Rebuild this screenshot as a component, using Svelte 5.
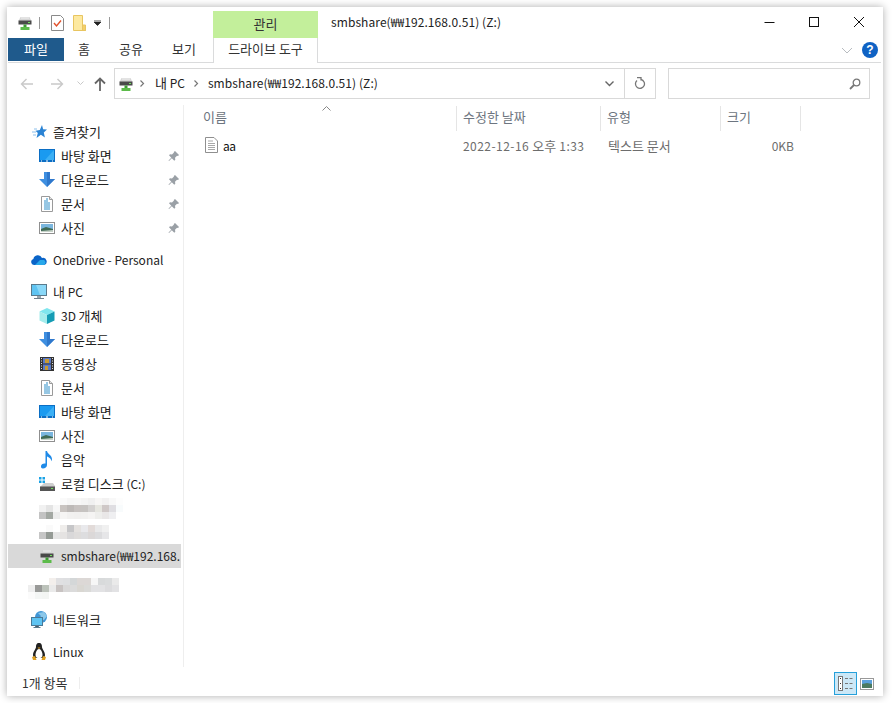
<script lang="ts">
  const title = 'smbshare(₩₩192.168.0.51) (Z:)'

  const favorites = [
    { icon: 'desktop', label: '바탕 화면' },
    { icon: 'download', label: '다운로드' },
    { icon: 'doc', label: '문서' },
    { icon: 'photo', label: '사진' }
  ]

  const pcItems = [
    { icon: 'cube', label: '3D 개체' },
    { icon: 'download', label: '다운로드' },
    { icon: 'film', label: '동영상' },
    { icon: 'doc', label: '문서' },
    { icon: 'desktop', label: '바탕 화면' },
    { icon: 'photo', label: '사진' },
    { icon: 'music', label: '음악' },
    { icon: 'disk', label: '로컬 디스크 (C:)' }
  ]

  // redacted drive names, drawn as coarse mosaics (cell colours by row)
  const mosaicA = [
    '#fff,#fff,#fff,#fafafa,#f6f6f6,#f7f7f7,#f4f4f4,#f0f0f0,#f7f6f5,#f2f1f1,#f8f8f8,#fdfdfd',
    '#f1f1f1,#e4e4e4,#f7f7f7,#c9c4c1,#bdb9b7,#c7c2c0,#c6c3c1,#d4d2d1,#e6e6e0,#cfc8c7,#dfdee2,#f8fbfc',
    '#c3c3c3,#a3a8a3,#ececec,#f6f5f4,#f2f1f0,#f1f0ef,#f2f1f0,#f5f4f3,#eeeeec,#e9e7e7,#efeff1,#fff'
  ]
  const mosaicB = [
    '#fff,#fafafa,#fff,#efedeb,#c6c6c8,#e4e1df,#e9e9ec,#e2dbd9,#e9e9ea,#f0f0f0',
    '#c6c6c6,#959b96,#e6e6e6,#e5e3e2,#d9d8d9,#dedcdb,#dddddf,#dbd8d8,#dcdcde,#e6e6e8'
  ]
  const mosaicC = [
    '#fff,#fff,#fff,#f3efec,#e0e0e2,#dedfe1,#d4d7d8,#dcd8d6,#dcd8d6,#f6f6f6,#d8dadb,#dadcdd,#eaeaea',
    '#eeeeee,#999a98,#bcc2ba,#eaeaea,#c8c3c2,#d9d8d8,#dbdbdb,#d9d7d2,#dadad8,#e2e2e4,#e2e2e4,#dcdcde,#e2e2e4',
    '#fbfbfb,#f4f6f5,#f3f5f3,#fff,#fff,#fff,#fff,#fff,#fff,#fff,#fff,#fff,#fff'
  ]

  // Hangul runs are set a size up, the CJK font is narrower than the original one
  function runs(s: string): string[] {
    return s.split(/([\uAC00-\uD7A3]+(?: [\uAC00-\uD7A3]+)*)/)
  }
</script>

{#snippet txt(s: string)}
  {#each runs(s) as part, i}
    {#if i % 2 === 1}<span class="ko">{part}</span>{:else if part}<span class="lat">{part}</span>{/if}
  {/each}
{/snippet}

{#snippet smbIcon()}
  <svg width="16" height="16" viewBox="0 0 16 16">
    <path d="M3.500 2h9l2 4h-13z" fill="#d6d6d6" />
    <path d="M4 3h8" stroke="#f0f0f0" />
    <rect x="1.500" y="5.500" width="13" height="4" fill="#4a4a4a" />
    <rect x="11" y="7" width="2" height="1" fill="#6fe05c" />
    <rect x="6.500" y="9.500" width="3" height="2.500" fill="#3f9c35" />
    <rect x="3.500" y="12" width="9" height="3" fill="#5cbb4a" />
  </svg>
{/snippet}

{#snippet navIcon(name: string)}
  {#if name === 'desktop'}
    <svg width="16" height="16" viewBox="0 0 16 16">
      <rect x="0" y="1" width="16" height="13" fill="#0b6ec4" />
      <path d="M1 2h14v10H1z" fill="#1a9af0" />
      <path d="M15 2v10H6z" fill="#3cb0f5" />
      <path d="M2 13h1M7 13h2M13 13h1" stroke="#fff" />
    </svg>
  {:else if name === 'download'}
    <svg width="16" height="16" viewBox="0 0 16 16">
      <path d="M5 0h6v7h5l-8 8-8-8h5z" fill="#3f8fe0" />
      <path d="M8 0h3v7h5l-8 8z" fill="#2f78cc" />
    </svg>
  {:else if name === 'doc'}
    <svg width="16" height="16" viewBox="0 0 16 16">
      <path d="M2.500.5h8l3 3v12h-11z" fill="#fff" stroke="#9a9a9a" />
      <path d="M7 3h2M5 5h4M5 7h6M5 9h6M5 11h6M5 13h6" stroke="#2f8fc8" />
      <path d="M10.500.5v3h3" fill="#e4e4e4" stroke="#9a9a9a" />
    </svg>
  {:else if name === 'photo'}
    <svg width="16" height="16" viewBox="0 0 16 16">
      <rect x=".5" y="2.500" width="15" height="11" fill="#fff" stroke="#8f8f8f" />
      <rect x="2" y="4" width="12" height="8" fill="#7ab6de" />
      <path d="M2 9l5-2 7 2v3H2z" fill="#3f6a55" />
      <path d="M2 11l12-1v2H2z" fill="#c6d2c8" />
    </svg>
  {:else if name === 'cube'}
    <svg width="16" height="16" viewBox="0 0 16 16">
      <path d="M8 0l7.500 3.500L8 7 .5 3.500z" fill="#7fe6ee" />
      <path d="M.5 3.500L8 7v9L.5 12.500z" fill="#a5ecec" />
      <path d="M15.500 3.500L8 7v9l7.500-3.500z" fill="#149cb4" />
    </svg>
  {:else if name === 'film'}
    <svg width="16" height="16" viewBox="0 0 16 16">
      <rect x="1" y="1" width="14" height="14" fill="#333" />
      <rect x="4" y="2" width="8" height="5.500" fill="#5a7ac8" />
      <rect x="4" y="8.500" width="8" height="5.500" fill="#5a7ac8" />
      <path d="M6 3h4v4H6zM6 10h3v4H6z" fill="#c89a30" />
      <path d="M2 2.500h1M2 5h1M2 7.500h1M2 10h1M2 12.500h1M13 2.500h1M13 5h1M13 7.500h1M13 10h1M13 12.500h1" stroke="#ddd" />
    </svg>
  {:else if name === 'music'}
    <svg width="16" height="18" viewBox="0 0 16 18">
      <path d="M6.500 0h1.500c.3 3 5 4 5 8 0 1-.3 1.700-.8 2.300.2-2.800-2.200-4-4.200-4.800V14c0 2-2 3.500-4 3.500S2 16.500 2 15s2-3 4.500-2.500z" fill="#1f8ae8" />
    </svg>
  {:else if name === 'disk'}
    <svg width="16" height="16" viewBox="0 0 16 16">
      <path d="M0 1h2.500v2.500H0zM3.500 1H6v2.500H3.500zM0 4.500h2.500V7H0zM3.500 4.500H6V7H3.500z" fill="#19a2e6" />
      <path d="M3 9l2-2h9l2 3v1H1z" fill="#cfcfcf" />
      <rect x="1" y="10.500" width="15" height="4.500" fill="#555" />
      <rect x="12" y="12" width="2" height="1" fill="#6fe05c" />
    </svg>
  {:else if name === 'star'}
    <svg width="16" height="16" viewBox="0 0 16 16">
      <path d="M11 1l1.100 4.200L16 5.500l-3.200 3 1.100 5-4-2.700L5.500 14l1.300-5L4.500 6.800l4.300-.8z" fill="#2a83d4" />
      <path d="M1 8h4M2 11h3M3 5h3" stroke="#8cc0ec" />
    </svg>
  {:else if name === 'cloud'}
    <svg width="16" height="16" viewBox="0 0 16 16">
      <path d="M3 13a3 3 0 0 1-.6-5.900A4.500 4.500 0 0 1 11 6a3.500 3.500 0 0 1 2 7z" fill="#0a64c8" />
      <path d="M4 13l5-5 4 0a2.800 2.800 0 0 1 0 5z" fill="#28a8ea" />
    </svg>
  {:else if name === 'pc'}
    <svg width="16" height="16" viewBox="0 0 16 16">
      <rect x=".5" y=".5" width="15" height="11" fill="#5fc4f2" stroke="#5a7a8c" />
      <path d="M5 1h10v10H9z" fill="#8ad8f8" />
      <path d="M6 12h4v2H6z" fill="#9aa6ae" />
      <path d="M3 14.500h10" stroke="#6f7f8a" />
    </svg>
  {:else if name === 'network'}
    <svg width="16" height="18" viewBox="0 0 16 18">
      <circle cx="10" cy="6" r="6" fill="#3f96d6" />
      <path d="M7 2l3 3-2 3 5 1 3-4-3-4z" fill="#8cc8ea" />
      <rect x=".5" y="6.500" width="11" height="8" fill="#5fc4f2" stroke="#4a7a98" />
      <path d="M4.500 15h3v1h-3zM2.500 16.500h7" stroke="#5d7b8e" />
    </svg>
  {:else if name === 'tux'}
    <svg width="16" height="18" viewBox="0 0 16 18">
      <path d="M8 0c2.500 0 3 2.200 3 4 0 2 3 4.500 3 8 0 1.500-1 3-2 3H4c-1 0-2-1.500-2-3 0-3.500 3-6 3-8 0-1.800.5-4 3-4z" fill="#222" />
      <path d="M8 6c2 0 3.500 3.500 3.500 6S10 15 8 15s-3.500-.5-3.500-3S6 6 8 6z" fill="#fff" />
      <path d="M6.500 4.500h3L8 6z" fill="#e0a020" />
      <path d="M1 14l3-1 1.500 4H2zM15 14l-3-1-1.500 4H14z" fill="#e0a020" />
    </svg>
  {/if}
{/snippet}

{#snippet mosaic(rows: string[], cls: string)}
  <div class="mosaic {cls}">
    {#each rows as row}
      <div class="mosaic-row">
        {#each row.split(',') as c}
          <span style="background:{c}"></span>
        {/each}
      </div>
    {/each}
  </div>
{/snippet}

<div class="window">
  <header class="titlebar">
    <div class="qat">
      {@render smbIcon()}
      <i class="qat-sep"></i>
      <svg width="13" height="16" viewBox="0 0 13 16">
        <path d="M.5.5h9l3 3v12H.5z" fill="#fff" stroke="#8a8a8a" />
        <path d="M3 8l2.500 3L10 5.500" fill="none" stroke="#e2502a" stroke-width="1.400" />
      </svg>
      <svg class="folder" width="13" height="16" viewBox="0 0 13 16">
        <path d="M.5.500h9v12h3v3H.5z" fill="#fde9a0" stroke="#e8c560" />
        <path d="M9.500 10h3v5.500h-3z" fill="#f4cf6a" stroke="#e8c560" />
      </svg>
      <svg class="drop" width="7" height="6" viewBox="0 0 7 6">
        <path d="M0 0h7M0 2h7L3.500 5.500z" stroke="#222" fill="#222" stroke-width=".8" />
      </svg>
      <i class="qat-sep last"></i>
    </div>
    <div class="context-tab">{@render txt('관리')}</div>
    <div class="win-title long">{title}</div>
    <div class="win-buttons">
      <svg width="12" height="12" viewBox="0 0 12 12"><path d="M1.500 6.500h10" stroke="#111" /></svg>
      <svg width="12" height="12" viewBox="0 0 12 12"><rect x="1.500" y="1.500" width="9" height="9" fill="none" stroke="#111" /></svg>
      <svg width="12" height="12" viewBox="0 0 12 12"><path d="M1 1l10 10M11 1L1 11" stroke="#111" /></svg>
    </div>
  </header>

  <nav class="ribbon">
    <div class="tab-file">{@render txt('파일')}</div>
    <div class="tab">{@render txt('홈')}</div>
    <div class="tab">{@render txt('공유')}</div>
    <div class="tab">{@render txt('보기')}</div>
    <div class="tab-drive">{@render txt('드라이브 도구')}</div>
    <div class="ribbon-end">
      <svg width="12" height="7" viewBox="0 0 12 7"><path d="M1 1l5 5 5-5" fill="none" stroke="#b8bcc0" /></svg>
      <div class="help">?</div>
    </div>
  </nav>

  <div class="address-row">
    <div class="nav-buttons">
      <svg width="14" height="12" viewBox="0 0 14 12"><path d="M13 6H2M6.500 1L1.500 6l5 5" fill="none" stroke="#c9c9c9" stroke-width="1.400" /></svg>
      <svg width="14" height="12" viewBox="0 0 14 12"><path d="M1 6h11M7.500 1l5 5-5 5" fill="none" stroke="#c9c9c9" stroke-width="1.400" /></svg>
      <svg width="7" height="5" viewBox="0 0 7 5"><path d="M.5.500l3 3 3-3" fill="none" stroke="#c9c9c9" /></svg>
      <svg class="up" width="12" height="14" viewBox="0 0 12 14"><path d="M6 14V2M1 6.500l5-5 5 5" fill="none" stroke="#666" stroke-width="1.800" /></svg>
    </div>
    <div class="address">
      <span class="addr-icon">{@render smbIcon()}</span>
      <svg class="crumb-arrow" width="5" height="7" viewBox="0 0 5 7"><path d="M.5.500l3 3-3 3" fill="none" stroke="#777" stroke-width="1.200" /></svg>
      <span class="crumb">{@render txt('내 PC')}</span>
      <svg class="crumb-arrow" width="5" height="7" viewBox="0 0 5 7"><path d="M.5.500l3 3-3 3" fill="none" stroke="#777" stroke-width="1.200" /></svg>
      <span class="crumb long">{title}</span>
      <div class="addr-drop">
        <svg width="9" height="6" viewBox="0 0 9 6"><path d="M.5.500l4 4 4-4" fill="none" stroke="#666" stroke-width="1.400" /></svg>
      </div>
      <div class="addr-refresh">
        <svg width="12" height="13" viewBox="0 0 12 13"><path d="M7 2.500a4.500 4.500 0 1 1-4 1M3 .5h4v3" fill="none" stroke="#777" stroke-width="1.300" /></svg>
      </div>
    </div>
    <div class="search">
      <svg width="12" height="12" viewBox="0 0 12 12"><circle cx="7.500" cy="4.500" r="3.300" fill="none" stroke="#777" stroke-width="1.300" /><path d="M5 7l-4 4" stroke="#777" stroke-width="1.800" /></svg>
    </div>
  </div>

  <div class="body">
    <aside class="sidebar">
      <div class="nav-row top"><span class="ico">{@render navIcon('star')}</span>{@render txt('즐겨찾기')}</div>
      {#each favorites as item}
        <div class="nav-row sub">
          <span class="ico">{@render navIcon(item.icon)}</span>{@render txt(item.label)}
          <svg class="pin" width="11" height="11" viewBox="0 0 11 11"><path d="M7 0l4 4-1 1-1-.3-2 2 .3 2-1 1-2.500-2.500L1 10l-.5-.5 2.800-2.800L1 4.300l1-1 2 .3 2-2L5.800 1z" fill="#9aa0a6" /></svg>
        </div>
      {/each}
      <div class="nav-row top gap"><span class="ico">{@render navIcon('cloud')}</span><span class="lat">OneDrive - Personal</span></div>
      <div class="nav-row top gap"><span class="ico">{@render navIcon('pc')}</span>{@render txt('내 PC')}</div>
      {#each pcItems as item}
        <div class="nav-row sub">
          <span class="ico">{@render navIcon(item.icon)}</span>{@render txt(item.label)}
        </div>
      {/each}
      <div class="nav-row sub">{@render mosaic(mosaicA, 'ma')}</div>
      <div class="nav-row sub">{@render mosaic(mosaicB, 'mb')}</div>
      <div class="nav-row sub selected"><span class="ico">{@render smbIcon()}</span><span class="lat">smbshare(₩₩192.168.</span></div>
      <div class="nav-row top gap">{@render mosaic(mosaicC, 'mc')}</div>
      <div class="nav-row top gap"><span class="ico">{@render navIcon('network')}</span>{@render txt('네트워크')}</div>
      <div class="nav-row top gap"><span class="ico">{@render navIcon('tux')}</span><span class="lat">Linux</span></div>
    </aside>

    <main class="files">
      <div class="col-head">
        <svg class="sort" width="9" height="5" viewBox="0 0 9 5"><path d="M.5 4.500l4-4 4 4" fill="none" stroke="#888" /></svg>
        <div class="col c-name">{@render txt('이름')}</div>
        <div class="col c-date">{@render txt('수정한 날짜')}</div>
        <div class="col c-type">{@render txt('유형')}</div>
        <div class="col c-size">{@render txt('크기')}</div>
      </div>
      <div class="file-row">
        <div class="c-name name-cell">
          <svg width="13" height="16" viewBox="0 0 13 16">
            <path d="M.5.500h8.500l3.500 3.500v11.500H.5z" fill="#fff" stroke="#8f8f8f" />
            <path d="M3 4h5M3 6.500h7M3 8.500h7M3 10.500h7M3 12.500h7" stroke="#a8a8a8" />
          </svg>
          <span class="aa">aa</span>
        </div>
        <div class="c-date cell stamp">{@render txt('2022-12-16 오후 1:33')}</div>
        <div class="c-type cell">{@render txt('텍스트 문서')}</div>
        <div class="c-size cell size">0KB</div>
      </div>
    </main>
  </div>

  <footer class="status">
    <span class="count">{@render txt('1개 항목')}</span>
    <i class="status-sep"></i>
    <div class="views">
      <div class="view active">
        <svg width="17" height="17" viewBox="0 0 17 17">
          <rect x="1.500" y="1.500" width="4" height="14" fill="#fff" stroke="#777" />
          <path d="M3 3.500h1M3 8.500h1M3 13.500h1" stroke="#333" />
          <path d="M8 3.500h3M12.500 3.500h3M8 8.500h3M12.500 8.500h3M8 13.500h3M12.500 13.500h3" stroke="#777" />
        </svg>
      </div>
      <div class="view plain">
        <svg width="14" height="12" viewBox="0 0 14 12">
          <rect x=".5" y=".5" width="13" height="11" fill="#fff" stroke="#999" />
          <rect x="2" y="2" width="10" height="8" fill="#5aa0dc" />
          <path d="M2 6l5-1 5 1v4H2z" fill="#4b7a60" />
        </svg>
      </div>
    </div>
  </footer>
</div>

<style>
  :global(body) {
    margin: 0;
    background: #fff;
  }

  .window {
    box-sizing: border-box;
    width: 876px;
    height: 689px;
    margin: 7px;
    display: flex;
    flex-direction: column;
    background: #fff;
    box-shadow: 0 0 8px rgba(0, 0, 0, 0.32);
    font-family: "Noto Sans CJK KR", "Noto Sans", sans-serif;
    font-size: 12px;
    color: #1a1a1a;
    overflow: hidden;
  }

  .ko {
    font-size: 13px;
  }

  .long {
    letter-spacing: 0.08px;
  }

  svg {
    display: block;
    flex-shrink: 0;
  }

  .titlebar {
    height: 31px;
    display: flex;
    align-items: flex-end;
    flex-shrink: 0;
  }

  .qat {
    width: 206px;
    height: 31px;
    display: flex;
    align-items: center;
    padding: 0 0 0 10px;
    box-sizing: border-box;
  }

  .qat-sep {
    width: 1px;
    height: 12px;
    background: #999;
    margin: 0 11px 0 6px;
  }

  .qat-sep.last {
    margin: 0 0 0 8px;
  }

  .folder {
    margin-left: 9px;
  }

  .drop {
    margin-left: 8px;
  }

  .context-tab {
    width: 105px;
    height: 27px;
    background: #c3ef9b;
    text-align: center;
    line-height: 26px;
    color: #333;
  }

  .win-title {
    margin-left: 13px;
    height: 31px;
    line-height: 30px;
    color: #222;
  }

  .win-buttons {
    margin-left: auto;
    height: 31px;
    display: flex;
    align-items: center;
    gap: 33px;
    padding: 0 18px 1px 0;
    box-sizing: border-box;
  }

  .ribbon {
    height: 25px;
    display: flex;
    flex-shrink: 0;
    box-sizing: border-box;
    border-bottom: 1px solid #dadbdc;
    margin: 0 2px 0 1px;
  }

  .tab-file {
    width: 56px;
    height: 23px;
    line-height: 21px;
    text-align: center;
    background: #1f5a8c;
    color: #fff;
  }

  .tab {
    width: 40px;
    line-height: 21px;
    text-align: center;
    color: #333;
  }

  .tab:nth-child(3) {
    width: 54px;
  }

  .tab:nth-child(4) {
    width: 52px;
    margin-right: 3px;
  }

  .tab-drive {
    box-sizing: border-box;
    width: 105px;
    height: 25px;
    line-height: 21px;
    text-align: center;
    color: #333;
    background: #fff;
    border-left: 1px solid #dadbdc;
    border-right: 1px solid #dadbdc;
    margin-bottom: -1px;
  }

  .ribbon-end {
    margin-left: auto;
    display: flex;
    align-items: center;
    gap: 9px;
    padding: 0 3px 0 0;
  }

  .help {
    width: 16px;
    height: 16px;
    border-radius: 50%;
    background: #0f62c4;
    color: #fff;
    font: bold 12px/16px "Liberation Sans", sans-serif;
    text-align: center;
  }

  .address-row {
    height: 42px;
    display: flex;
    align-items: flex-start;
    padding-top: 5px;
    box-sizing: border-box;
    flex-shrink: 0;
  }

  .nav-buttons {
    width: 107px;
    height: 31px;
    display: flex;
    align-items: center;
    padding-left: 13px;
    box-sizing: border-box;
  }

  .nav-buttons svg:nth-child(2) {
    margin-left: 16px;
  }

  .nav-buttons svg:nth-child(3) {
    margin-left: 13px;
  }

  .up {
    margin-left: 10px;
  }

  .address {
    box-sizing: border-box;
    width: 542px;
    height: 31px;
    border: 1px solid #d9d9d9;
    display: flex;
    align-items: center;
    padding-left: 3px;
    line-height: 27px;
  }

  .crumb-arrow {
    margin: 0 9px;
  }

  .addr-icon + .crumb-arrow {
    margin: 0 10px 0 6px;
  }

  .crumb {
    color: #222;
    padding-bottom: 2px;
  }

  .addr-drop {
    margin-left: auto;
    width: 30px;
    height: 29px;
    display: flex;
    align-items: center;
    justify-content: center;
  }

  .addr-refresh {
    width: 30px;
    height: 29px;
    border-left: 1px solid #d9d9d9;
    display: flex;
    align-items: center;
    justify-content: center;
  }

  .search {
    box-sizing: border-box;
    width: 202px;
    height: 31px;
    margin-left: 12px;
    border: 1px solid #d9d9d9;
    display: flex;
    align-items: center;
    justify-content: flex-end;
    padding-right: 8px;
  }

  .body {
    flex: 1;
    min-height: 0;
    display: flex;
  }

  .sidebar {
    box-sizing: border-box;
    width: 177px;
    flex-shrink: 0;
    border-right: 1px solid #eeeeee;
    padding: 15px 0 0 1px;
    margin-bottom: 5px;
    overflow: hidden;
  }

  .nav-row {
    box-sizing: border-box;
    height: 24px;
    display: flex;
    align-items: center;
    white-space: nowrap;
    color: #222;
    position: relative;
    width: 173px;
    overflow: hidden;
    line-height: 22px;
  }

  .nav-row.top {
    padding-left: 23px;
  }

  .nav-row.sub {
    padding-left: 31px;
  }

  .nav-row.gap {
    margin-top: 8px;
  }

  .nav-row.selected {
    background: #d9d9d9;
  }

  .nav-row :global(.lat),
  .nav-row :global(.ko) {
    white-space: pre;
  }

  .ico {
    width: 16px;
    height: 18px;
    margin-right: 6px;
    display: flex;
    align-items: center;
    justify-content: center;
  }

  .pin {
    position: absolute;
    left: 160px;
    top: 7px;
  }

  .mosaic {
    display: flex;
    flex-direction: column;
  }

  .mosaic-row {
    display: flex;
  }

  .mosaic-row span {
    width: 7px;
    height: 7px;
  }

  .mc {
    margin-left: -3px;
  }

  .files {
    flex: 1;
    min-width: 0;
    color: #6d6d6d;
  }

  .col-head {
    height: 26px;
    display: flex;
    position: relative;
    margin-top: 1px;
    color: #6d7580;
  }

  .sort {
    position: absolute;
    left: 138px;
    top: 0;
  }

  .col {
    box-sizing: border-box;
    height: 25px;
    line-height: 21px;
    padding-left: 6px;
    border-right: 1px solid #e5e5e5;
  }

  .c-name {
    width: 273px;
    padding-left: 19px;
    box-sizing: border-box;
  }

  .c-date {
    width: 144px;
    box-sizing: border-box;
  }

  .c-type {
    width: 120px;
    box-sizing: border-box;
  }

  .c-size {
    width: 80px;
    box-sizing: border-box;
  }

  .file-row {
    height: 24px;
    margin-top: 1px;
    display: flex;
    align-items: center;
  }

  .name-cell {
    display: flex;
    align-items: center;
    gap: 5px;
    padding-left: 21px;
    color: #111;
  }

  .aa {
    letter-spacing: -0.5px;
  }

  .cell {
    padding-left: 7px;
  }

  .stamp {
    padding-left: 6px;
  }

  .stamp :global(.lat) {
    letter-spacing: 0.45px;
  }

  .size {
    text-align: right;
    padding-right: 7px;
  }

  .status {
    height: 24px;
    flex-shrink: 0;
    display: flex;
    align-items: flex-start;
    padding: 0 8px 0 15px;
    color: #333;
    line-height: 22px;
  }

  .count {
    width: 57px;
  }

  .status-sep {
    width: 1px;
    height: 12px;
    margin-top: 5px;
    background: #eee;
  }

  .views {
    margin-left: auto;
    display: flex;
    align-items: center;
    gap: 2px;
  }

  .view {
    box-sizing: border-box;
    width: 23px;
    height: 23px;
    display: flex;
    align-items: center;
    justify-content: center;
  }

  .view.plain {
    width: 16px;
  }

  .view.active {
    background: #cce8f7;
    border: 1px solid #26a0da;
  }
</style>
